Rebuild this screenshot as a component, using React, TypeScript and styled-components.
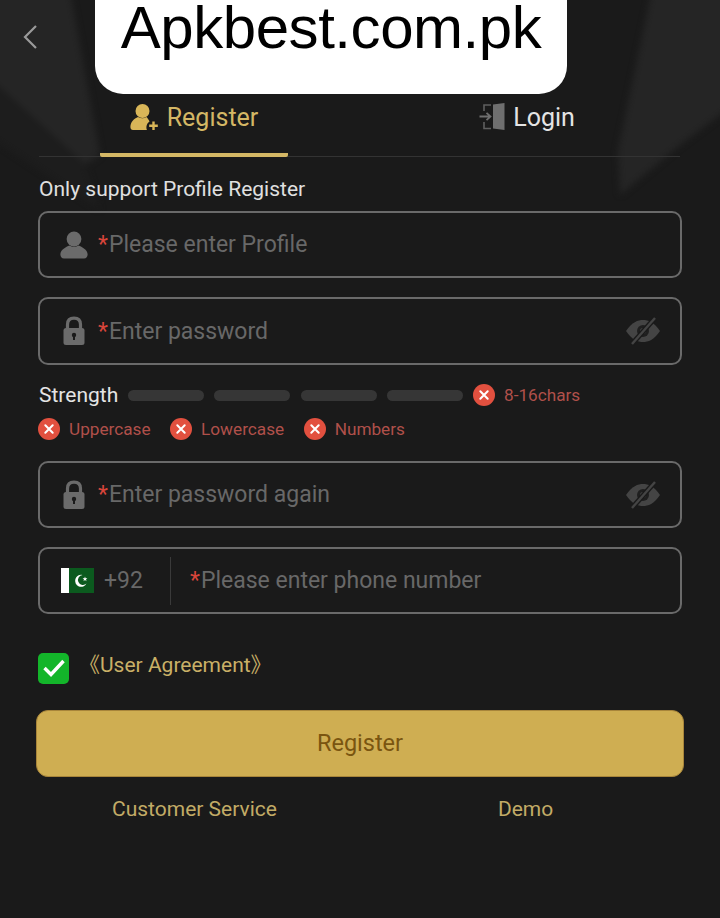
import styled, { createGlobalStyle } from "styled-components";

const GlobalStyle = createGlobalStyle`
html, body {
    margin: 0;
    padding: 0;
    background: #1a1a1a;
    font-family: Roboto, "Noto Sans CJK SC", "Liberation Sans", sans-serif;
}
`;

const UserIcon = ({ color, size = 30 }: { color: string; size?: number }) => (
    <svg width={size} height={size} viewBox="0 0 30 30">
        <circle cx="15" cy="9" r="7.4" fill={color} />
        <path d="M10.5 15.5 C7 17 1.6 19.5 1.4 24 C1.3 27 2.5 28.5 5 28.5 H25 C27.5 28.5 28.7 27 28.6 24 C28.4 19.5 23 17 19.5 15.5 C17 17.2 13 17.2 10.5 15.5 Z" fill={color} />
    </svg>
);

const RegisterIcon = () => (
    <svg width="30" height="28" viewBox="0 0 30 28">
        <circle cx="12.5" cy="8" r="7" fill="#d9b658" />
        <path d="M8 14 C4 15.5 0.5 19 0.4 24 C0.4 26 1.5 27 3 27 H17 C16 25 16 21 19.5 18.5 C18.6 16.5 17.5 15 16.5 14 C14 15.8 11 15.8 8 14 Z" fill="#d9b658" />
        <path d="M23.5 18.5 V27 M19.2 22.8 H27.8" stroke="#d9b658" strokeWidth="2.4" />
    </svg>
);

const LoginIcon = () => (
    <svg width="26" height="28" viewBox="0 0 26 28">
        <path d="M14 1.5 L25.5 0 V27 L14 25.5 Z" fill="#6f6f6f" />
        <path d="M12 2 H5 V8 M5 19 V25.5 H12" fill="none" stroke="#5f5f5f" strokeWidth="1.6" />
        <path d="M0.5 13.5 H11 M7.5 9.8 L11.5 13.5 L7.5 17.2" fill="none" stroke="#6f6f6f" strokeWidth="1.8" />
    </svg>
);

const LockIcon = () => (
    <svg width="24" height="30" viewBox="0 0 24 30">
        <path d="M5.5 13 V8.5 C5.5 4.5 8 2.2 12 2.2 C16 2.2 18.5 4.5 18.5 8.5 V13" fill="none" stroke="#6b6b6b" strokeWidth="3.2" />
        <rect x="1.5" y="12" width="21" height="17" rx="2.5" fill="#6b6b6b" />
        <circle cx="12" cy="19" r="2.2" fill="#1a1a1a" />
        <rect x="11" y="19" width="2" height="5" fill="#1a1a1a" />
    </svg>
);

const EyeOffIcon = () => (
    <svg width="36" height="30" viewBox="0 0 36 30">
        <path d="M1 15 C7 6 13 4 18 4 C23 4 29 6 35 15 C29 24 23 26 18 26 C13 26 7 24 1 15 Z" fill="#444" />
        <circle cx="18" cy="15" r="6" fill="#1f1f1f" />
        <circle cx="18" cy="15" r="3" fill="#444" />
        <path d="M7 28 L30 2" stroke="#1a1a1a" strokeWidth="5" />
        <path d="M7 28 L30 2" stroke="#444" strokeWidth="2.4" />
    </svg>
);

const CrossBadge = () => (
    <svg width="22" height="22" viewBox="0 0 22 22">
        <circle cx="11" cy="11" r="11" fill="#e2503f" />
        <path d="M7.3 7.3 L14.7 14.7 M14.7 7.3 L7.3 14.7" stroke="#fff" strokeWidth="2" strokeLinecap="round" />
    </svg>
);

const PakistanFlag = () => (
    <svg width="33" height="25" viewBox="0 0 33 25">
        <rect width="33" height="25" fill="#0b5a1e" />
        <rect width="8" height="25" fill="#fff" />
        <path d="M21.5 7 A6 6 0 1 0 25.5 15.5 A5 5 0 1 1 21.5 7 Z" fill="#fff" />
        <path d="M24 8.5 L24.6 10.3 L26.4 10.3 L25 11.4 L25.5 13.2 L24 12.1 L22.5 13.2 L23 11.4 L21.6 10.3 L23.4 10.3 Z" fill="#fff" />
    </svg>
);

// faint polygons behind the header, running past the page edge so the blur doesn't fade there
const RaysArt = () => (
    <RaysSvg width="720" height="240" viewBox="0 0 720 240">
        <polygon points="-20,-20 68,-20 100,155 85,165 -20,70" fill="#252525" />
        <polygon points="-20,70 85,165 100,210 -20,130" fill="#1d1d1d" />
        <polygon points="654,-20 740,-20 740,100 680,145 620,195 618,150" fill="#252525" />
    </RaysSvg>
);

const Field = ({ icon, text, eye, tall }: { icon: React.ReactNode; text: string; eye?: boolean; tall?: boolean }) => (
    <FieldBox $tall={tall}>
        <FieldIcon>{icon}</FieldIcon>
        <Placeholder><em>*</em>{text}</Placeholder>
        {eye && <EyeSlot><EyeOffIcon /></EyeSlot>}
    </FieldBox>
);

const Rule = ({ text }: { text: string }) => (
    <RuleItem>
        <CrossBadge />
        <span>{text}</span>
    </RuleItem>
);

const App = function() {
    return ( <>
        <GlobalStyle />
        <Page>
            <RaysArt />
            <Watermark>Apkbest.com.pk</Watermark>
            <TopBar>
                <svg width="16" height="26" viewBox="0 0 16 26">
                    <path d="M14 2 L3 13 L14 24" fill="none" stroke="#9a9a9a" strokeWidth="2.2" />
                </svg>
            </TopBar>
            <Tabs>
                <Tab $active>
                    <RegisterIcon />
                    Register
                </Tab>
                <Tab>
                    <LoginIcon />
                    Login
                </Tab>
            </Tabs>
            <Form>
                <Hint>Only support Profile Register</Hint>
                <Field icon={<UserIcon color="#6b6b6b" />} text="Please enter Profile" />
                <Field icon={<LockIcon />} text="Enter password" eye tall />
                <Strength>
                    <StrengthLabel>Strength</StrengthLabel>
                    <Bar />
                    <Bar />
                    <Bar />
                    <Bar />
                    <Rule text="8-16chars" />
                </Strength>
                <Rules>
                    <Rule text="Uppercase" />
                    <Rule text="Lowercase" />
                    <Rule text="Numbers" />
                </Rules>
                <Field icon={<LockIcon />} text="Enter password again" eye />
                <FieldBox>
                    <CountryCode>
                        <PakistanFlag />
                        +92
                    </CountryCode>
                    <Placeholder><em>*</em>Please enter phone number</Placeholder>
                </FieldBox>
                <Agreement>
                    <CheckBox>
                        <svg width="24" height="20" viewBox="0 0 24 20">
                            <path d="M2.5 10 L9 16.5 L21.5 3" fill="none" stroke="#fff" strokeWidth="3.4" />
                        </svg>
                    </CheckBox>
                    <AgreementText>《User Agreement》</AgreementText>
                </Agreement>
                <SubmitButton>Register</SubmitButton>
                <Links>
                    <span>Customer Service</span>
                    <span>Demo</span>
                </Links>
            </Form>
        </Page>
    </>
    )
}

export default App;

const Page = styled.div`
position: relative;
width: 720px;
height: 918px;
overflow: hidden;
background: #1a1a1a;
`

const RaysSvg = styled.svg`
position: absolute;
top: 0;
left: 0;
overflow: visible;
filter: blur(3px);
`

const Watermark = styled.div`
position: absolute;
top: 0;
left: 95px;
width: 472px;
height: 94px;
background: #fff;
border-radius: 0 0 28px 28px;
color: #000;
font-family: "Liberation Sans", Arial, sans-serif;
font-size: 60px;
letter-spacing: -0.45px;
line-height: 55px;
text-align: center;
z-index: 2;
`

const TopBar = styled.div`
position: relative;
height: 94px;
padding: 24px 0 0 22px;
box-sizing: border-box;
`

const Tabs = styled.div`
position: relative;
display: flex;
gap: 145px;
height: 63px;
margin: 0 40px 0 39px;
padding-left: 61px;
box-sizing: border-box;
border-bottom: 1px solid #333;
`

const Tab = styled.div<{ $active?: boolean }>`
width: 188px;
height: 63px;
box-sizing: border-box;
display: flex;
align-items: center;
justify-content: center;
gap: ${(p) => (p.$active ? "7px" : "8px")};
padding-bottom: ${(p) => (p.$active ? "13px" : "17px")};
font-size: 25px;
color: ${(p) => (p.$active ? "#d4b765" : "#e4e4e4")};
border-bottom: ${(p) => (p.$active ? "4px solid #d4b765" : "none")};
border-radius: 2px;
`

const Form = styled.div`
position: relative;
padding: 20px 38px 0;
display: flex;
flex-direction: column;
`

const Hint = styled.div`
font-size: 21px;
line-height: 24px;
margin: 0 0 10px 1px;
color: #e0e0e0;
`

const FieldBox = styled.div<{ $tall?: boolean }>`
display: flex;
align-items: center;
height: ${(p) => (p.$tall ? "68px" : "67px")};
box-sizing: border-box;
border: 2px solid #6a6a6a;
border-radius: 10px;
margin-bottom: 19px;
padding: 0 20px 0 19px;
`

const FieldIcon = styled.div`
width: 30px;
height: 30px;
margin-right: 9px;
display: flex;
align-items: center;
justify-content: center;
`

const Placeholder = styled.div`
flex: 1;
font-size: 23px;
color: #686868;

em {
    font-style: normal;
    color: #d8453a;
    margin-right: 1px;
}
`

const EyeSlot = styled.div`
display: flex;
margin-right: -1px;
`

const Strength = styled.div`
display: flex;
align-items: center;
height: 22px;
margin: 0 0 11px 1px;
`

const StrengthLabel = styled.div`
font-size: 21px;
color: #e4e4e4;
margin-right: 10px;
`

const Bar = styled.div`
width: 76px;
height: 11px;
border-radius: 6px;
background: #363636;
margin-right: 10.2px;
`

const RuleItem = styled.div`
display: flex;
align-items: center;
gap: 9px;
font-size: 17.2px;
color: #b0504a;
`

const Rules = styled.div`
display: flex;
gap: 19.5px;
height: 24px;
margin-bottom: 20px;
`

const CountryCode = styled.div`
display: flex;
align-items: center;
gap: 10px;
width: 109px;
height: 48px;
margin: 0 19px 0 2px;
border-right: 1px solid #3a3a3a;
font-size: 23px;
color: #686868;
`

const Agreement = styled.div`
display: flex;
align-items: center;
gap: 10px;
height: 32px;
margin: 19px 0 26px;
font-size: 21px;
color: #c9b067;
`

const AgreementText = styled.span`
margin-bottom: 11px;
`

const CheckBox = styled.div`
width: 31px;
height: 31px;
border-radius: 5px;
background: #13b52a;
display: flex;
align-items: center;
justify-content: center;
`

const SubmitButton = styled.button`
height: 67px;
margin: 0 -2px;
padding-bottom: 3px;
border: 1px solid #a8853a;
border-radius: 12px;
background: #cfae52;
color: #7a5510;
font-family: inherit;
font-size: 23.5px;
`

const Links = styled.div`
display: flex;
height: 24px;
margin-top: 20px;
font-size: 21px;
color: #c2ab66;

span:first-child {
    margin-left: 74px;
}
span:last-child {
    margin-left: 221px;
}
`
